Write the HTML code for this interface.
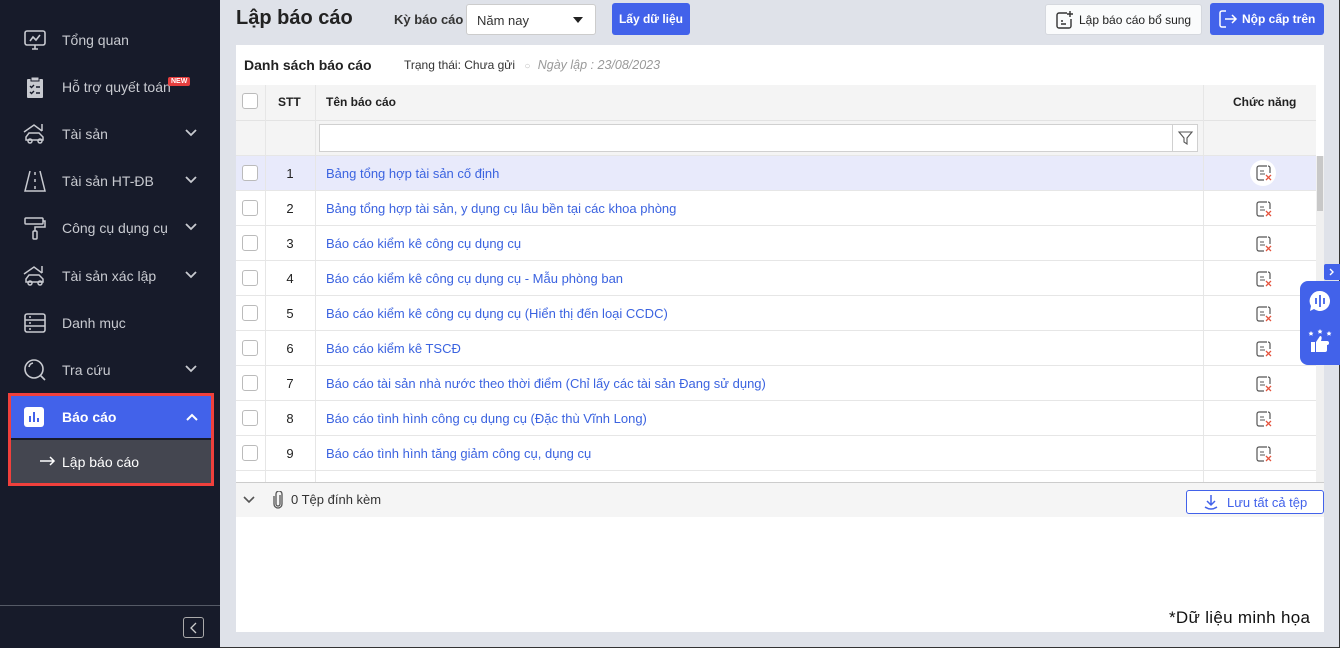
<!DOCTYPE html>
<html><head><meta charset="utf-8"><style>
*{box-sizing:border-box;margin:0;padding:0}
body{width:1340px;height:648px;overflow:hidden;font-family:"Liberation Sans",sans-serif;background:#dfe2e9;position:relative;border-right:1px solid #333;border-bottom:1px solid #333}
.abs{position:absolute}
#sb{left:0;top:0;width:220px;height:648px;background:#171b2a}
.it{position:absolute;left:0;width:220px;height:40px;color:#c8cad0;font-size:14px}
.it .ic{position:absolute;left:23px;top:9px;width:24px;height:24px}
.it .tx{position:absolute;left:62px;top:13px}
.it .ch{position:absolute;left:184px;top:15px}
.row{position:absolute;left:236px;width:1080px;height:35px;border-bottom:1px solid #e6e6e6;background:#fff}
.row .cb{position:absolute;left:6px;top:9px;width:16px;height:16px;border:1px solid #bbb;border-radius:3px;background:#fff}
.row .n{position:absolute;left:29px;width:50px;text-align:center;top:10px;font-size:13px;color:#222}
.row .t{position:absolute;left:90px;top:10px;color:#3b63e0;font-size:13px}
.vl{position:absolute;top:85px;width:1px;height:397px;background:#e6e6e6}
</style></head><body>
<svg width="0" height="0" style="position:absolute"><defs><symbol id="chv" viewBox="0 0 14 10"><path d="M2 2l5 5 5-5" fill="none" stroke="#c8cad0" stroke-width="1.8"/></symbol></defs></svg>
<div id="sb" class="abs">
 <div class="it" style="top:19px"><svg class="ic" viewBox="0 0 24 24" fill="none" stroke="#c8cad0" stroke-width="1.6"><rect x="2" y="3" width="20" height="14" rx="2"/><path d="M7 13l3-4 3 3 4-5M9 21h6M12 17v4"/></svg><span class="tx">Tổng quan</span></div>
 <div class="it" style="top:66px"><svg class="ic" viewBox="0 0 24 24"><rect x="4" y="4" width="16" height="19" rx="1" fill="#c8cad0"/><rect x="8" y="2" width="8" height="4" fill="#c8cad0" stroke="#171b2a"/><path d="M7 11l1.5 1.5L11 10M7 17l1.5 1.5L11 16M13 12h4M13 18h4" stroke="#171b2a" stroke-width="1.4" fill="none"/></svg><span class="tx">Hỗ trợ quyết toán</span><span class="abs" style="left:168px;top:11px;background:#e53e3e;color:#fff;font-size:7px;font-weight:bold;padding:1px 3px;border-radius:2px">NEW</span></div>
 <div class="it" style="top:113px"><svg class="ic" viewBox="0 0 24 24" fill="none" stroke="#c8cad0" stroke-width="1.5"><path d="M1 10L11 3l8 6M19 2v7"/><path d="M3 18v-3l3-4h10l4 4v3z"/><circle cx="7" cy="19" r="2"/><circle cx="17" cy="19" r="2"/></svg><span class="tx">Tài sản</span><svg class="ch" width="14" height="10"><use href="#chv"/></svg></div>
 <div class="it" style="top:160px"><svg class="ic" viewBox="0 0 24 24" fill="none" stroke="#c8cad0" stroke-width="1.5"><path d="M7 2L2 22h20L17 2M12 3v3M12 10v3M12 17v3"/></svg><span class="tx">Tài sản HT-ĐB</span><svg class="ch" width="14" height="10"><use href="#chv"/></svg></div>
 <div class="it" style="top:207px"><svg class="ic" viewBox="0 0 24 24" fill="none" stroke="#c8cad0" stroke-width="1.5"><rect x="2" y="2" width="18" height="6" rx="1"/><path d="M20 5h2v6H12v4"/><rect x="10" y="15" width="4" height="8" rx="1"/></svg><span class="tx">Công cụ dụng cụ</span><svg class="ch" width="14" height="10"><use href="#chv"/></svg></div>
 <div class="it" style="top:255px"><svg class="ic" viewBox="0 0 24 24" fill="none" stroke="#c8cad0" stroke-width="1.5"><path d="M1 10L11 3l8 6M19 2v7"/><path d="M3 18v-3l3-4h10l4 4v3z"/><circle cx="7" cy="19" r="2"/><circle cx="17" cy="19" r="2"/></svg><span class="tx">Tài sản xác lập</span><svg class="ch" width="14" height="10"><use href="#chv"/></svg></div>
 <div class="it" style="top:302px"><svg class="ic" viewBox="0 0 24 24" fill="none" stroke="#c8cad0" stroke-width="1.6"><rect x="2" y="3" width="20" height="18" rx="2"/><path d="M2 9h20M2 15h20M6 6h2M6 12h2M6 18h2"/></svg><span class="tx">Danh mục</span></div>
 <div class="it" style="top:349px"><svg class="ic" viewBox="0 0 24 24" fill="none" stroke="#c8cad0" stroke-width="1.6"><circle cx="11" cy="11" r="9"/><path d="M17.5 17.5L22 22M6 9a5 5 0 0 1 4-4"/></svg><span class="tx">Tra cứu</span><svg class="ch" width="14" height="10"><use href="#chv"/></svg></div>
 <div class="abs" style="left:8px;top:393px;width:206px;height:93px;border:3px solid #f0403c"></div>
 <div class="abs" style="left:11px;top:396px;width:200px;height:42px;background:#4262ea;color:#fff;font-size:14px;font-weight:bold">
  <svg class="abs" style="left:13px;top:11px" width="20" height="20" viewBox="0 0 20 20"><rect width="20" height="20" rx="3" fill="#fff"/><path d="M6 15V9M10 15V5M14 15v-4" stroke="#4262ea" stroke-width="2"/></svg>
  <span class="abs" style="left:51px;top:13px">Báo cáo</span><svg class="abs" style="left:174px;top:16px" width="14" height="10" viewBox="0 0 14 10"><path d="M2 8l5-5 5 5" fill="none" stroke="#fff" stroke-width="2"/></svg></div>
 <div class="abs" style="left:11px;top:440px;width:200px;height:43px;background:#444650;color:#fff;font-size:14px"><svg class="abs" style="left:29px;top:16px" width="16" height="10" viewBox="0 0 16 10"><path d="M0 5h14M10 1l4 4-4 4" fill="none" stroke="#fff" stroke-width="1.5"/></svg><span class="abs" style="left:51px;top:14px">Lập báo cáo</span></div>
 <div class="abs" style="left:0;top:605px;width:220px;height:1px;background:#555a66"></div>
 <div class="abs" style="left:183px;top:617px;width:21px;height:21px;border:1px solid #aaa;border-radius:3px"><svg class="abs" style="left:6px;top:4px" width="8" height="12" viewBox="0 0 8 12"><path d="M6 1L1 6l5 5" fill="none" stroke="#ccc" stroke-width="1.3"/></svg></div>
</div>
<div class="abs" style="left:236px;top:7px;font-size:20px;font-weight:bold;color:#222">Lập báo cáo</div>
<div class="abs" style="left:394px;top:12px;font-size:13px;font-weight:bold;color:#333">Kỳ báo cáo</div>
<div class="abs" style="left:466px;top:4px;width:130px;height:31px;background:#fff;border:1px solid #ccc;border-radius:3px;font-size:13px;color:#333"><span class="abs" style="left:10px;top:8px">Năm nay</span><svg class="abs" style="left:106px;top:12px" width="10" height="6"><path d="M0 0h10L5 6z" fill="#222"/></svg></div>
<div class="abs" style="left:612px;top:3px;width:78px;height:32px;background:#4262ea;border-radius:3px;color:#fff;font-size:12px;font-weight:bold;text-align:center;line-height:32px">Lấy dữ liệu</div>
<div class="abs" style="left:1045px;top:4px;width:157px;height:31px;background:#fafbfc;border:1px solid #d5d8de;border-radius:3px;font-size:12px;color:#222"><svg class="abs" style="left:9px;top:5px" width="20" height="20" viewBox="0 0 20 20" fill="none" stroke="#333" stroke-width="1.4"><path d="M12 3H4a2 2 0 0 0-2 2v11a2 2 0 0 0 2 2h10a2 2 0 0 0 2-2V9M15 1v6M12 4h6M6 11h2M6 14h5"/></svg><span class="abs" style="left:33px;top:8px">Lập báo cáo bổ sung</span></div>
<div class="abs" style="left:1210px;top:3px;width:114px;height:32px;background:#4262ea;border-radius:3px;color:#fff;font-size:12px;font-weight:bold"><svg class="abs" style="left:8px;top:6px" width="20" height="20" viewBox="0 0 20 20" fill="none" stroke="#fff" stroke-width="1.5"><path d="M8 2H4a2 2 0 0 0-2 2v12a2 2 0 0 0 2 2h4M7 10h11M14 6l4 4-4 4"/></svg><span class="abs" style="left:32px;top:9px">Nộp cấp trên</span></div>

<div class="abs" style="left:236px;top:45px;width:1088px;height:587px;background:#fff"></div>
<div class="abs" style="left:244px;top:57px;font-size:14px;font-weight:bold;color:#222">Danh sách báo cáo</div>
<div class="abs" style="left:404px;top:58px;font-size:12px;color:#333">Trạng thái: Chưa gửi <span style="color:#bbb;font-size:10px;margin-left:6px">○</span> <i style="color:#999;margin-left:4px;font-size:12.5px">Ngày lập : 23/08/2023</i></div>
<div class="abs" style="left:236px;top:85px;width:1080px;height:71px;background:#f4f4f4;border-bottom:1px solid #e6e6e6"></div>
<div class="abs" style="left:236px;top:120px;width:1080px;height:1px;background:#e3e3e3"></div>
<div class="abs" style="left:242px;top:93px;width:16px;height:16px;border:1px solid #bbb;border-radius:3px;background:#fff"></div>
<div class="abs" style="left:278px;top:95px;font-size:12px;font-weight:bold;color:#222">STT</div>
<div class="abs" style="left:326px;top:95px;font-size:12px;font-weight:bold;color:#222">Tên báo cáo</div>
<div class="abs" style="left:1233px;top:95px;font-size:12px;font-weight:bold;color:#222">Chức năng</div>
<div class="abs" style="left:319px;top:124px;width:879px;height:28px;background:#fff;border:1px solid #d0d0d0"></div>
<div class="abs" style="left:1172px;top:124px;width:1px;height:28px;background:#d0d0d0"></div>
<svg class="abs" style="left:1177px;top:129px" width="17" height="17" viewBox="0 0 17 17" fill="none" stroke="#555" stroke-width="1.1"><path d="M2 3h13L10 9v6L7 13V9z"/></svg>

<div class="row" style="top:156px;background:#e8eafb"><div class="cb"></div><div class="n">1</div><div class="t">Bảng tổng hợp tài sản cố định</div><div class="abs" style="left:1014px;top:4px;width:26px;height:26px;border-radius:13px;background:#fff"></div></div>
<div class="row" style="top:191px"><div class="cb"></div><div class="n">2</div><div class="t">Bảng tổng hợp tài sản, y dụng cụ lâu bền tại các khoa phòng</div></div>
<div class="row" style="top:226px"><div class="cb"></div><div class="n">3</div><div class="t">Báo cáo kiểm kê công cụ dụng cụ</div></div>
<div class="row" style="top:261px"><div class="cb"></div><div class="n">4</div><div class="t">Báo cáo kiểm kê công cụ dụng cụ - Mẫu phòng ban</div></div>
<div class="row" style="top:296px"><div class="cb"></div><div class="n">5</div><div class="t">Báo cáo kiểm kê công cụ dụng cụ (Hiển thị đến loại CCDC)</div></div>
<div class="row" style="top:331px"><div class="cb"></div><div class="n">6</div><div class="t">Báo cáo kiểm kê TSCĐ</div></div>
<div class="row" style="top:366px"><div class="cb"></div><div class="n">7</div><div class="t">Báo cáo tài sản nhà nước theo thời điểm (Chỉ lấy các tài sản Đang sử dụng)</div></div>
<div class="row" style="top:401px"><div class="cb"></div><div class="n">8</div><div class="t">Báo cáo tình hình công cụ dụng cụ (Đặc thù Vĩnh Long)</div></div>
<div class="row" style="top:436px"><div class="cb"></div><div class="n">9</div><div class="t">Báo cáo tình hình tăng giảm công cụ, dụng cụ</div></div>
<div class="row" style="top:471px;height:11px;border:none"></div>
<div class="vl" style="left:265px"></div><div class="vl" style="left:315px"></div><div class="vl" style="left:1203px"></div>
<svg class="abs" style="left:0;top:0" width="1340" height="648">
<defs><g id="fi" fill="none"><path d="M11 2H3a2 2 0 0 0-2 2v10a2 2 0 0 0 2 2h5M14 9V4a2 2 0 0 0-2-2" stroke="#555" stroke-width="1.2"/><path d="M4 7h4M4 10h5" stroke="#777" stroke-width="1.2"/><path d="M10 11l5 5M15 11l-5 5" stroke="#e5533d" stroke-width="1.3"/></g></defs>
<use href="#fi" x="1256" y="164"/><use href="#fi" x="1256" y="200"/><use href="#fi" x="1256" y="235"/><use href="#fi" x="1256" y="270"/><use href="#fi" x="1256" y="305"/><use href="#fi" x="1256" y="340"/><use href="#fi" x="1256" y="375"/><use href="#fi" x="1256" y="410"/><use href="#fi" x="1256" y="445"/>
</svg>
<div class="abs" style="left:1316px;top:156px;width:8px;height:326px;background:#f0f0f0"></div>
<div class="abs" style="left:1317px;top:156px;width:6px;height:55px;background:#c8c8c8"></div>
<div class="abs" style="left:236px;top:482px;width:1088px;height:35px;background:#f5f5f5;border-top:1px solid #ccc"></div>
<svg class="abs" style="left:243px;top:496px" width="12" height="8" viewBox="0 0 12 8"><path d="M1 1l5 5 5-5" fill="none" stroke="#555" stroke-width="1.6"/></svg>
<svg class="abs" style="left:272px;top:491px" width="12" height="18" viewBox="0 0 12 18" fill="none" stroke="#555" stroke-width="1.3"><path d="M8 4v9a2 2 0 0 1-4 0V3a3 3 0 0 1 6 0v10a4 4 0 0 1-8 0V5"/></svg>
<div class="abs" style="left:291px;top:492px;font-size:13px;color:#333">0 Tệp đính kèm</div>
<div class="abs" style="left:1186px;top:490px;width:138px;height:24px;border:1px solid #4262ea;border-radius:3px;background:#fff;color:#4262ea;font-size:13px"><svg class="abs" style="left:16px;top:3px" width="16" height="16" viewBox="0 0 16 16" fill="none" stroke="#4262ea" stroke-width="1.5"><path d="M8 1v10M4 7l4 4 4-4M2 13q6 4 12 0"/></svg><span class="abs" style="left:40px;top:4px">Lưu tất cả tệp</span></div>
<div class="abs" style="left:1169px;top:608px;font-size:17px;color:#111;letter-spacing:0.3px">*Dữ liệu minh họa</div>
<div class="abs" style="left:1324px;top:264px;width:16px;height:16px;background:#4262ea;border-radius:2px 0 0 2px"><svg class="abs" style="left:5px;top:4px" width="6" height="8" viewBox="0 0 6 8"><path d="M1 1l3 3-3 3" fill="none" stroke="#fff" stroke-width="1.4"/></svg></div>
<div class="abs" style="left:1300px;top:281px;width:40px;height:84px;background:#4262ea;border-radius:8px 0 0 8px">
<svg class="abs" style="left:9px;top:9px" width="22" height="22" viewBox="0 0 22 22"><path d="M11 1a10 10 0 1 1-6 18l-4 2 1-5A10 10 0 0 1 11 1z" fill="#fff"/><path d="M7 8v6M11 5v12M15 8v6" stroke="#4262ea" stroke-width="1.8"/></svg>
<svg class="abs" style="left:8px;top:48px" width="24" height="24" viewBox="0 0 24 24" fill="#fff"><path d="M3 2l.8 1.6 1.7.2-1.2 1.2.3 1.7L3 5.9 1.4 6.7l.3-1.7L.5 3.8l1.7-.2zM12 0l.8 1.6 1.7.2-1.2 1.2.3 1.7L12 3.9l-1.6.8.3-1.7-1.2-1.2 1.7-.2zM21 2l.8 1.6 1.7.2-1.2 1.2.3 1.7L21 5.9l-1.6.8.3-1.7-1.2-1.2 1.7-.2z"/><rect x="3" y="13" width="4" height="10"/><path d="M8 13l4-6c2 0 2 2 1 5h6a2 2 0 0 1 0 4v5a2 2 0 0 1-2 2H8z"/></svg>
</div>
</body></html>
